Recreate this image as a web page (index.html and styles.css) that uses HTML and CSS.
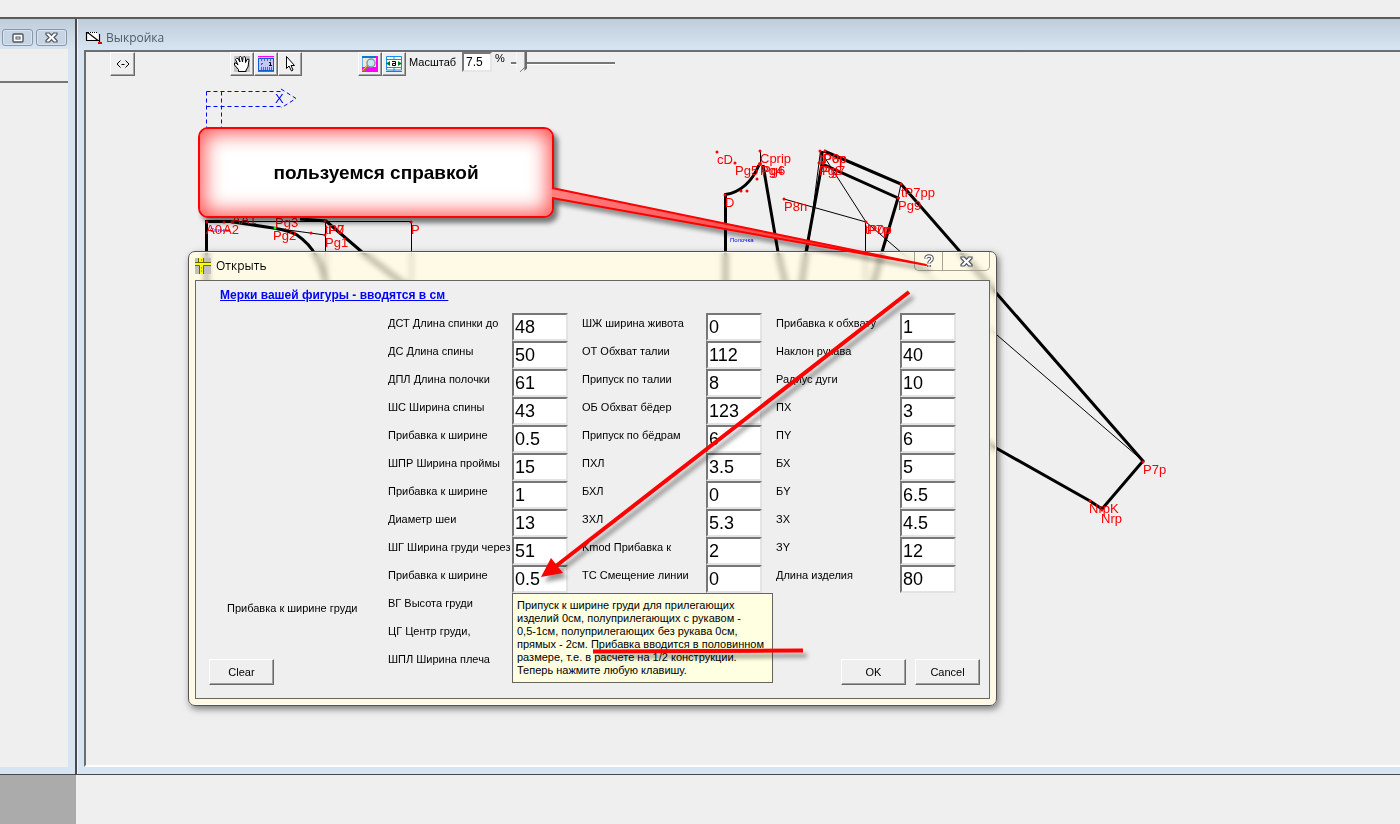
FILE: index.html
```html
<!DOCTYPE html>
<html lang="ru">
<head>
<meta charset="utf-8">
<title>Выкройка</title>
<link rel="stylesheet" href="styles.css">
</head>
<body>
<div class="app">
  <div class="menu-strip"></div>
  <main class="workspace">
    <section class="window window-side">
      <header class="side-caption">
        <button class="cap-btn" aria-label="Развернуть"><svg width="12" height="10" viewBox="0 0 12 10"><rect x="1" y="1" width="10" height="8" rx="1" fill="#fff" stroke="#50545e" stroke-width="1.4"/><rect x="4" y="4" width="4" height="2" fill="#fff" stroke="#50545e"/></svg></button>
        <button class="cap-btn" aria-label="Закрыть"><svg width="13" height="11" viewBox="0 0 13 11"><path d="M1 1h3.500l2 2.300L8.500 1H12v1.500L9 5.500l3 3V10H8.500l-2-2.300L4.500 10H1V8.500l3-3-3-3z" fill="#fff" stroke="#50545e" stroke-width="1.200"/></svg></button>
      </header>
      <div class="side-client"><div class="side-head"></div></div>
    </section>
    <section class="window window-main">
      <header class="main-caption">
        <svg width="17" height="16" viewBox="0 0 17 16"><path d="M1 2h10l3 3v6H1z" fill="#fff"/><path d="M1.500 2v8.500H14M1 2.500l3 1 9 7M14.500 4v9M1 2.500h3" fill="none" stroke="#000" stroke-width="1.200"/><path d="M5 2.500h8" stroke="#000" stroke-dasharray="1 1"/><path d="M13 12h4v2h-4z" fill="#e00000"/></svg>
        <h1>Выкройка</h1>
      </header>
      <div class="canvas">
        <svg class="drawing" width="1314" height="714" viewBox="86 52 1314 714">
          <g class="dash">
            <path d="M206.500 91.500H283M206.500 106.500H283M206.500 91.500V140M221.500 91.500V140"/>
            <path d="M281 89l15 9.500-15 9.500"/>
          </g>
          <text class="axis" x="275" y="103">X</text>
          <g class="thin">
            <path d="M206 221.500H411.500V290M325.500 221V290M273 228l52 7"/>
            <path d="M760.500 151v14M820.500 151l-13 101M825 158l41 64 277 239M784 199l82 23M865.500 222v60M898 198l3-14"/>
          </g>
          <g class="thick">
            <path d="M206.500 290V221.500H230L273 228Q291 231 297 235 322 252 327 290"/>
            <path d="M300 219l26 2 36 31 50 38"/>
            <path d="M725.500 290V194.500Q748 191 759 165M763 165l15 87 9 38"/>
            <path d="M801 290l5-38 16-88 76 34-16 54-10 38M822 151v13M824 151l77 33 242 277-41 48-12-8-94-53-40-22"/>
          </g>
          <g class="dots">
            <circle cx="207" cy="222" r="1.500"/><circle cx="224" cy="222" r="1.500"/><circle cx="232" cy="222" r="1.500"/><circle cx="311" cy="233" r="1.500"/><circle cx="325" cy="221" r="1.500"/><circle cx="325" cy="235" r="1.500"/><circle cx="411" cy="222" r="1.500"/>
            <circle cx="717" cy="152" r="1.500"/><circle cx="735" cy="163" r="1.500"/><circle cx="760" cy="151" r="1.500"/><circle cx="760" cy="164" r="2"/><circle cx="757" cy="179" r="1.500"/><circle cx="741" cy="191" r="1.500"/><circle cx="747" cy="191" r="1.500"/><circle cx="725" cy="195" r="1.500"/><circle cx="784" cy="199" r="1.500"/>
            <circle cx="820" cy="151" r="1.500"/><circle cx="825" cy="151" r="1.500"/><circle cx="819" cy="163" r="1.500"/><circle cx="823" cy="163" r="2"/><circle cx="901" cy="184" r="1.500"/><circle cx="898" cy="198" r="1.500"/><circle cx="866" cy="222" r="1.500"/><circle cx="1143" cy="462" r="1.500"/><circle cx="1090" cy="501" r="1.500"/><circle cx="1102" cy="510" r="1.500"/>
            <circle cx="275" cy="228" r="1.500" fill="#0f0"/>
          </g>
          <g class="tiny"><text x="210" y="232">Спинка</text><text x="730" y="242">Полочка</text></g>
          <g class="pt">
            <text x="206" y="234">A0</text><text x="223" y="234">A2</text><text x="232" y="224">AA1</text><text x="275" y="227">Pg3</text><text x="273" y="240">Pg2</text><text x="325" y="247">Pg1</text><text x="325" y="234">tP7</text><text x="328" y="234">P0</text><text x="411" y="234">P</text>
            <text x="717" y="164">cD</text><text x="735" y="175">Pg5</text><text x="760" y="163">Cprip</text><text x="760" y="175">Pg4</text><text x="762" y="175">Pg6</text><text x="725" y="207">D</text><text x="784" y="211">P8n</text>
            <text x="820" y="163">tP8p</text><text x="823" y="163">P0p</text><text x="819" y="175">Pg8</text><text x="822" y="175">Pg7</text><text x="901" y="197">tP7pp</text><text x="898" y="210">Pg9</text><text x="865" y="234">tP0p</text><text x="867" y="234">P7p</text>
            <text x="1143" y="474">P7p</text><text x="1089" y="513">NrpK</text><text x="1101" y="523">Nrp</text>
          </g>
        </svg>
        <div class="toolbar">
          <button class="tool first" aria-label="Ширина"><svg width="16" height="16" viewBox="0 0 16 16"><path d="M5.500 4.500L2 8l3.500 3.500M10.500 4.500L14 8l-3.500 3.500M6.500 8.500h3" fill="none" stroke="#000"/></svg></button>
          <div class="group">
            <button class="tool" aria-label="Рука"><svg width="16" height="16" viewBox="0 0 16 16"><path d="M0 0h16v16H0z" fill="#c3c3c3"/><path d="M4.500 15.500v-2L.5 9V7H2l2 2-2.500-5.500 1-1H4L6 6 5 1.500 6.500.5l1 1L8.500 6 9 1.500l1-1 1.500 1V6.500L13 3.500l1.500-.5.5 1-1 7-2 3v1.500z" fill="#fff" stroke="#000"/></svg></button>
            <button class="tool" aria-label="Линейка"><svg width="16" height="16" viewBox="0 0 16 16"><path d="M0 0h16v16H0z" fill="#c3c6ff"/><path d="M.5 2v13M15.500 2v13M0 14.500h16M0 2.500h16" stroke="#0a62d0"/><path d="M3.500 3v2M6.500 3v2M9.500 3v2M12.500 3v2M3.500 11v3M5.500 11v3M7.500 11v3M9.500 11v3M11.500 11v3M13.500 11v3" stroke="#667"/><path d="M0 .5h16M0 15.500h16" stroke="#f0f"/><path d="M3.500 9V7.500H5" stroke="#06c" fill="none"/><path d="M11 6.500h1.500v3M11 9.500h3" stroke="#000" fill="none"/></svg></button>
            <button class="tool" aria-label="Указатель"><svg width="16" height="18" viewBox="0 0 16 18"><path d="M4.500 1.500v12l2.500-2.500 2.500 5 1.500-1-2-4.500h3.500z" fill="#fff" stroke="#000"/></svg></button>
          </div>
          <div class="group fit">
            <button class="tool" aria-label="Лупа"><svg width="16" height="16" viewBox="0 0 16 16"><path d="M0 0h16v16H0z" fill="#f0f"/><path d="M0 0h14v11H0z" fill="#efe8d5"/><path d="M0 0h14v2H0z" fill="#0878d0"/><path d="M.5 2v9" stroke="#68aee8"/><path d="M6 10l-5 5" stroke="#9a713a" stroke-width="3"/><path d="M5.500 9.500l-5 5" stroke="#f5c266"/><circle cx="9" cy="7" r="4" fill="#c4e9f3" stroke="#8498a6" stroke-width="1.500"/></svg></button>
            <button class="tool" aria-label="По ширине"><svg width="16" height="16" viewBox="0 0 16 16"><path d="M.5.500h15v13.500H.5z" fill="#fff" stroke="#1790e8"/><path d="M0 3.500h16M0 11.500h16M8 0v4M8 11v4" stroke="#1790e8"/><path d="M0 15.500h16" stroke="#f0f"/><path d="M4 5v5L0 7.500zM12 5v5l4-2.500z" fill="#087818"/><path d="M6 5.500h3.500v4H6.500v-2h3" stroke="#000" fill="none"/></svg></button>
          </div>
          <label for="scale">Масштаб</label>
          <input id="scale" class="scale" type="text" value="7.5">
          <span class="percent">%</span>
          <input class="slider" type="range" min="0" max="100" value="6" aria-label="Масштаб, %">
        </div>
      </div>
    </section>
  </main>
  <footer class="status"><div class="status-dark"></div></footer>

  <section class="dialog" role="dialog" aria-labelledby="dlg-title">
    <header class="dlg-caption">
      <svg width="16" height="16" viewBox="0 0 16 16"><path d="M0 0h16v16H0z" fill="#c0c0c0"/><path d="M4 0h4v16H4zM0 4h16v4H0z" fill="#ff0"/><path d="M3.500 0v4M8.500 0v4M0 4.500h16M0 7.500h4.500V16M16 7.500H8.500V16" fill="none" stroke="#660"/><path d="M6 10h1M6 13h1M6 2h1" stroke="#660"/></svg>
      <h2 id="dlg-title">Открыть</h2>
      <div class="dlg-controls">
        <button type="button" aria-label="Справка"><svg width="12" height="14" viewBox="0 0 12 14"><path d="M3 4.500Q3 2 6 2t3 2.500Q9 6 7.500 7 6 8 6 9.500M6 11v2" fill="none" stroke="#4c4c5c" stroke-width="3.600"/><path d="M3 4.500Q3 2 6 2t3 2.500Q9 6 7.500 7 6 8 6 9.500M6 11.300v1.400" fill="none" stroke="#fff" stroke-width="1.700"/></svg></button>
        <button type="button" aria-label="Закрыть"><svg width="13" height="11" viewBox="0 0 13 11"><path d="M1 1h3.500l2 2.300L8.500 1H12v1.500L9 5.500l3 3V10H8.500l-2-2.300L4.500 10H1V8.500l3-3-3-3z" fill="#fff" stroke="#50545e" stroke-width="1.200"/></svg></button>
      </div>
    </header>
    <form class="dlg-body">
      <a class="heading" href="#">Мерки вашей фигуры - вводятся в см&nbsp;</a>
      <div class="form-grid">
        <div class="left">
          <p class="prompt">Прибавка к ширине груди</p>
          <button type="button" class="push">Clear</button>
        </div>
        <div class="col col-a">
          <div class="field"><label for="a1">ДСТ Длина спинки до</label><input id="a1" value="48"></div>
          <div class="field"><label for="a2">ДС Длина спины</label><input id="a2" value="50"></div>
          <div class="field"><label for="a3">ДПЛ Длина полочки</label><input id="a3" value="61"></div>
          <div class="field"><label for="a4">ШС Ширина спины</label><input id="a4" value="43"></div>
          <div class="field"><label for="a5">Прибавка к ширине</label><input id="a5" value="0.5"></div>
          <div class="field"><label for="a6">ШПР Ширина проймы</label><input id="a6" value="15"></div>
          <div class="field"><label for="a7">Прибавка к ширине</label><input id="a7" value="1"></div>
          <div class="field"><label for="a8">Диаметр шеи</label><input id="a8" value="13"></div>
          <div class="field"><label for="a9">ШГ Ширина груди через</label><input id="a9" value="51"></div>
          <div class="field"><label for="a10">Прибавка к ширине</label><input id="a10" value="0.5" aria-describedby="hint">
            <div class="hint" id="hint" role="tooltip">Припуск к ширине груди для прилегающих<br>изделий 0см, полуприлегающих с рукавом -<br>0,5-1см, полуприлегающих без рукава 0см,<br>прямых - 2см. Прибавка вводится в половинном<br>размере, т.е. в расчете на 1/2 конструкции.<br>Теперь нажмите любую клавишу.</div>
          </div>
          <div class="field"><span>ВГ Высота груди</span></div>
          <div class="field"><span>ЦГ Центр груди,</span></div>
          <div class="field"><span>ШПЛ Ширина плеча</span></div>
        </div>
        <div class="col">
          <div class="field"><label for="b1">ШЖ ширина живота</label><input id="b1" value="0"></div>
          <div class="field"><label for="b2">ОТ Обхват талии</label><input id="b2" value="112"></div>
          <div class="field"><label for="b3">Припуск по талии</label><input id="b3" value="8"></div>
          <div class="field"><label for="b4">ОБ Обхват бёдер</label><input id="b4" value="123"></div>
          <div class="field"><label for="b5">Припуск по бёдрам</label><input id="b5" value="6"></div>
          <div class="field"><label for="b6">ПХЛ</label><input id="b6" value="3.5"></div>
          <div class="field"><label for="b7">БХЛ</label><input id="b7" value="0"></div>
          <div class="field"><label for="b8">ЗХЛ</label><input id="b8" value="5.3"></div>
          <div class="field"><label for="b9">Kmod Прибавка к</label><input id="b9" value="2"></div>
          <div class="field"><label for="b10">ТС Смещение линии</label><input id="b10" value="0"></div>
        </div>
        <div class="col">
          <div class="field"><label for="c1">Прибавка к обхвату</label><input id="c1" value="1"></div>
          <div class="field"><label for="c2">Наклон рукава</label><input id="c2" value="40"></div>
          <div class="field"><label for="c3">Радиус дуги</label><input id="c3" value="10"></div>
          <div class="field"><label for="c4">ПХ</label><input id="c4" value="3"></div>
          <div class="field"><label for="c5">ПY</label><input id="c5" value="6"></div>
          <div class="field"><label for="c6">БХ</label><input id="c6" value="5"></div>
          <div class="field"><label for="c7">БY</label><input id="c7" value="6.5"></div>
          <div class="field"><label for="c8">ЗХ</label><input id="c8" value="4.5"></div>
          <div class="field"><label for="c9">ЗY</label><input id="c9" value="12"></div>
          <div class="field"><label for="c10">Длина изделия</label><input id="c10" value="80"></div>
        </div>
        <div class="actions">
          <button type="button" class="push">OK</button>
          <button type="button" class="push">Cancel</button>
        </div>
      </div>
    </form>
  </section>

  <div class="callout">пользуемся справкой</div>
  <svg class="marks" width="1400" height="824" viewBox="0 0 1400 824">
    <defs><linearGradient id="tail" x1="0" y1="0" x2="1" y2="0"><stop offset="0" stop-color="#ff8080"/><stop offset="1" stop-color="#ff2020"/></linearGradient></defs>
    <g class="mark-shadow">
      <path d="M552 188L926 265 552 198" fill="url(#tail)" stroke="#f00" stroke-width="2" stroke-linejoin="round"/>
      <path d="M909 292L556 566" stroke="#f00" stroke-width="4"/>
      <path d="M541 577l10-19 12 15z" fill="#f00"/>
      <path d="M593 651.500L803 650.500" stroke="#f00" stroke-width="4"/>
    </g>
  </svg>
</div>
</body>
</html>
```
FILE: styles.css
```css
* { box-sizing: border-box; }
body {
  margin: 0;
  background: #efefef;
  color: #000;
  font: 11px/13px "Liberation Sans", Arial, sans-serif;
}
h1, h2, p { margin: 0; font-weight: normal; }
button, input { font: inherit; color: inherit; }

.app {
  position: relative;
  display: flex;
  flex-direction: column;
  min-height: 100vh;
  overflow: hidden;
}
.menu-strip { height: 17px; }
.workspace { flex: 1; display: flex; border-top: 2px solid #5a5a5a; border-bottom: 1px solid #4a4a4a; }
.window { display: flex; flex-direction: column; background: linear-gradient(#bfcddb, #d7e4f2 31px); }
.window-side { width: 77px; padding: 0 7px 7px 0; border-right: 2px solid #4a4a4a; }
.window-main { flex: 1; min-width: 0; padding: 0 0 7px 6px; border-left: 1px solid #eef4fa; }

.side-caption { height: 30px; display: flex; gap: 3px; padding: 10px 0 0 2px; }
.cap-btn {
  width: 31px;
  height: 17px;
  padding: 0;
  display: grid;
  place-items: center;
  border: 1px solid #8796ab;
  border-radius: 3px;
  background: #c6d4e3;
  box-shadow: inset 0 0 0 1px #d9e4ef;
}
.side-client { flex: 1; background: #efefef; }
.side-head { height: 34px; border-bottom: 2px solid #777; }

.main-caption { height: 31px; display: flex; align-items: center; gap: 4px; padding: 6px 0 0 1px; }
.main-caption h1 { font: 12px/16px "Open Sans", sans-serif; color: #4e5a68; }
.canvas {
  position: relative;
  flex: 1;
  background: #efefef;
  border-left: 2px solid #6d6d6d;
  border-top: 2px solid #6d6d6d;
  border-bottom: 2px solid #fff;
}
.drawing { position: absolute; left: 0; top: 0; }
.dash path { fill: none; stroke: #00f; stroke-dasharray: 4 3; }
.thin path { fill: none; stroke: #000; }
.thick path { fill: none; stroke: #000; stroke-width: 3; }
.dots { fill: #f00; }
.pt text { font-size: 13px; fill: #f00; }
.axis { font-size: 13px; fill: #00f; }
.tiny text { font-size: 6px; fill: #00f; }

.toolbar { position: relative; display: flex; align-items: flex-start; padding-left: 24px; }
.tool {
  width: 25px;
  height: 24px;
  padding: 0;
  display: grid;
  place-items: center;
  background: #efefef;
  border: 1px solid;
  border-color: #fff #696969 #696969 #fff;
  box-shadow: inset -1px -1px #a5a5a5;
}
.first { margin-right: 95px; }
.group { display: flex; }
.group .tool { width: 24px; }
.fit { margin: 0 3px 0 56px; }
.toolbar label { font-size: 11px; line-height: 20px; width: 53px; }
.scale {
  width: 30px;
  height: 20px;
  padding: 0 2px;
  font-size: 12px;
  background: #fff;
  border: 2px solid;
  border-color: #777 #e6e6e6 #e6e6e6 #777;
}
.percent { margin: 0 6px 0 3px; }
.slider { appearance: none; width: 104px; height: 22px; margin: 0; background: transparent; }
.slider::-webkit-slider-runnable-track { height: 3px; background: #777; border-bottom: 1px solid #fff; }
.slider::-webkit-slider-thumb {
  appearance: none;
  width: 11px;
  height: 22px;
  margin-top: -10px;
  background:
    linear-gradient(-45deg, transparent 6px, #777 6px 7px, transparent 7px),
    linear-gradient(90deg, #fff 1px, #efefef 1px 8px, #a5a5a5 8px 9px, #696969 9px);
  clip-path: polygon(0 0, 100% 0, 100% 75%, 50% 100%, 0 75%);
}

.status { height: 49px; background: #efefef; display: flex; }
.status-dark { width: 76px; background: #ababab; }

.dialog {
  position: absolute;
  left: 188px;
  top: 251px;
  width: 809px;
  padding: 0 6px 6px;
  border: 1px solid #55554c;
  border-radius: 7px;
  background: rgba(255, 245, 205, 0.5);
  backdrop-filter: blur(3px) brightness(1.07);
  box-shadow: 2px 3px 7px rgba(0, 0, 0, 0.5), inset 0 0 0 1px rgba(255, 255, 255, 0.7);
}
.dlg-caption { height: 28px; display: flex; align-items: center; gap: 5px; }
.dlg-caption h2 { flex: 1; font: 12px/16px "Open Sans", sans-serif; }
.dlg-controls {
  align-self: flex-start;
  display: flex;
  border: 1px solid #a5a294;
  border-top: 0;
  border-radius: 0 0 5px 5px;
}
.dlg-controls button { width: 27px; height: 18px; padding: 0; border: 0; background: none; display: grid; place-items: center; }
.dlg-controls button + button { width: 47px; border-left: 1px solid #a5a294; }
.dlg-body { background: #efefef; border: 1px solid #68685f; padding: 8px 9px 13px 13px; }
.heading { display: block; width: max-content; margin: 0 0 11px 11px; font-weight: bold; font-size: 12px; line-height: 13px; color: #00f; }
.form-grid {
  display: grid;
  grid-template-columns: 165px 180px 180px 1fr;
  grid-template-rows: 280px 1fr;
  column-gap: 14px;
}
.left { grid-row: 1 / 3; display: flex; flex-direction: column; justify-content: flex-end; gap: 44px; }
.prompt { padding-left: 18px; white-space: nowrap; }
.col-a { grid-row: 1 / 3; padding-bottom: 8px; }
.field { position: relative; display: flex; height: 28px; }
.field label, .field > span { width: 124px; padding-top: 4px; white-space: nowrap; }
.field input {
  width: 56px;
  height: 28px;
  padding: 0 1px;
  font-size: 18px;
  background: #fff;
  border: 2px solid;
  border-color: #777 #e3e3e3 #e3e3e3 #777;
}
.hint {
  position: absolute;
  z-index: 1;
  left: 124px;
  top: 28px;
  width: 261px;
  padding: 5px 4px;
  background: #ffffe1;
  border: 1px solid #646464;
  white-space: nowrap;
}
.actions { grid-column: 3 / 5; display: flex; justify-content: flex-end; align-items: flex-end; gap: 9px; }
.push {
  width: 65px;
  height: 26px;
  padding: 0;
  background: #efefef;
  border: 1px solid;
  border-color: #fff #696969 #696969 #fff;
  box-shadow: inset -1px -1px #a0a0a0;
}

.callout {
  position: absolute;
  left: 198px;
  top: 127px;
  width: 356px;
  height: 91px;
  display: grid;
  place-items: center;
  font-size: 19px;
  font-weight: bold;
  background: #fff;
  border: 2px solid #f00;
  border-radius: 10px;
  box-shadow: inset 0 0 20px 4px #ff5050, 4px 5px 5px rgba(0, 0, 0, 0.5);
}
.marks { position: absolute; left: 0; top: 0; pointer-events: none; }
.mark-shadow { fill: none; filter: drop-shadow(4px 5px 2px rgba(0, 0, 0, 0.4)); }
```
